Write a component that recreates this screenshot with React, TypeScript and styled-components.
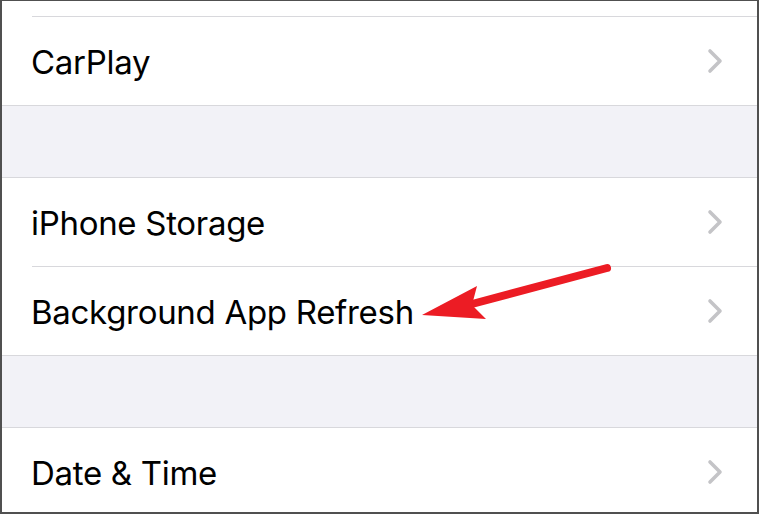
import React from "react";
import styled, { createGlobalStyle } from "styled-components";

const Global = createGlobalStyle`
  html, body { margin: 0; padding: 0; background: #ffffff; }
  body { font-family: Inter, "Noto Sans", sans-serif; }
`;

const Frame = styled.div`
  position: relative;
  box-sizing: border-box;
  width: 759px;
  height: 514px;
  overflow: hidden;
  background: #f2f2f7;
  border-top: 1px solid #505050;
  border-left: 2px solid #505050;
  border-right: 2px solid #505050;
  border-bottom: 2px solid #505050;
  display: flex;
  flex-direction: column;
`;

const Group = styled.div<{ $top?: boolean; $bottom?: boolean }>`
  background: #ffffff;
  border-top: ${(p) => (p.$top ? "1px solid #d8d8dc" : "none")};
  border-bottom: ${(p) => (p.$bottom ? "1px solid #d8d8dc" : "none")};
  display: flex;
  flex-direction: column;
`;

const Gap = styled.div`
  height: 71px;
  flex-shrink: 0;
`;

const Row = styled.div<{ $h?: number }>`
  height: ${(p) => p.$h ?? 88}px;
  flex-shrink: 0;
  display: flex;
  align-items: center;
  justify-content: space-between;
  padding: 0 34px 0 29px;
`;

const Separator = styled.div`
  height: 1px;
  margin-left: 30px;
  background: #d8d8dc;
`;

const Label = styled.span`
  font-size: 33px;
  color: #000000;
  letter-spacing: -0.3px;
  line-height: 1;
  padding-top: 2px;
`;

const Chevron = () => (
  <svg width="16" height="26" viewBox="0 0 16 26" aria-hidden>
    <polyline
      points="3,3 13,13 3,23"
      fill="none"
      stroke="#c4c4c7"
      strokeWidth="3.6"
      strokeLinecap="round"
      strokeLinejoin="round"
    />
  </svg>
);

const ArrowOverlay = styled.svg`
  position: absolute;
  left: 0;
  top: 0;
  pointer-events: none;
`;

const SettingsRow = ({ label }: { label: string }) => (
  <Row>
    <Label>{label}</Label>
    <Chevron />
  </Row>
);

export default function App() {
  return (
    <>
      <Global />
      <Frame>
        <Group $bottom>
          <Row $h={15} />
          <Separator />
          <SettingsRow label="CarPlay" />
        </Group>
        <Gap />
        <Group $top $bottom>
          <SettingsRow label="iPhone Storage" />
          <Separator />
          <SettingsRow label="Background App Refresh" />
        </Group>
        <Gap />
        <Group $top>
          <SettingsRow label="Date & Time" />
        </Group>
        <ArrowOverlay width="759" height="514" viewBox="0 0 759 514">
          <line
            x1="605"
            y1="267"
            x2="470"
            y2="303"
            stroke="#ec1c24"
            strokeWidth="8"
            strokeLinecap="round"
          />
          <polygon points="420,314 475,285 470,304 484,318" fill="#ec1c24" />
        </ArrowOverlay>
      </Frame>
    </>
  );
}
